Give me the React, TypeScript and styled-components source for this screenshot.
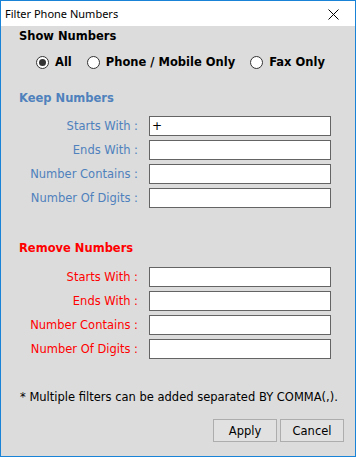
import React, { FC } from 'react';
import styled, { createGlobalStyle } from 'styled-components';

const GlobalStyle = createGlobalStyle`
  html, body {
    margin: 0;
    padding: 0;
    background: #ffffff;
  }
  * {
    box-sizing: border-box;
  }
`;

const colors = {
  accent: '#1883d7',
  face: '#dcdcdc',
  keep: '#4f81bd',
  remove: '#ff0000',
  inputBorder: '#646464',
};

type Field = { label: string; value?: string };

const FIELDS: Field[] = [
  { label: 'Starts With :' },
  { label: 'Ends With :' },
  { label: 'Number Contains :' },
  { label: 'Number Of Digits :' },
];

const RADIOS = [
  { label: 'All', checked: true },
  { label: 'Phone / Mobile Only', checked: false },
  { label: 'Fax Only', checked: false },
];

const App: FC = () => {
  return (
    <>
      <GlobalStyle />
      <Window>
        <TitleBar>
          <Title>Filter Phone Numbers</Title>
          <CloseButton aria-label="Close">
            <svg width="11" height="11" viewBox="0 0 11 11">
              <path d="M0.5 0.5 L10.5 10.5 M10.5 0.5 L0.5 10.5" stroke="#000" strokeWidth="1" />
            </svg>
          </CloseButton>
        </TitleBar>
        <Body>
          <Heading>Show Numbers</Heading>
          <RadioRow>
            {RADIOS.map(r => (
              <RadioOption key={r.label}>
                <RadioCircle $checked={r.checked} />
                <RadioLabel>{r.label}</RadioLabel>
              </RadioOption>
            ))}
          </RadioRow>

          <SectionTitle $color={colors.keep} $top={22} $bottom={11}>
            Keep Numbers
          </SectionTitle>
          <FieldGrid>
            {FIELDS.map((f, i) => (
              <React.Fragment key={f.label}>
                <FieldLabel $color={colors.keep}>{f.label}</FieldLabel>
                <TextBox>{i === 0 ? '+' : ''}</TextBox>
              </React.Fragment>
            ))}
          </FieldGrid>

          <SectionTitle $color={colors.remove} $top={33} $bottom={12}>
            Remove Numbers
          </SectionTitle>
          <FieldGrid>
            {FIELDS.map(f => (
              <React.Fragment key={f.label}>
                <FieldLabel $color={colors.remove}>{f.label}</FieldLabel>
                <TextBox />
              </React.Fragment>
            ))}
          </FieldGrid>

          <Note>* Multiple filters can be added separated BY COMMA(,).</Note>

          <ButtonRow>
            <Button>Apply</Button>
            <Button>Cancel</Button>
          </ButtonRow>
        </Body>
      </Window>
    </>
  );
};

const Window = styled.div`
  width: 356px;
  height: 457px;
  border: 1px solid ${colors.accent};
  display: flex;
  flex-direction: column;
  background: ${colors.face};
  font-family: 'DejaVu Sans', Verdana, sans-serif;
  font-size: 11.5px;
`;

const TitleBar = styled.div`
  height: 25px;
  background: #ffffff;
  display: flex;
  align-items: center;
  justify-content: space-between;
  padding-left: 4px;
`;

const Title = styled.div`
  font-family: 'Noto Sans', 'Open Sans', sans-serif;
  font-size: 11px;
  color: #000;
  margin-top: -1px;
`;

const CloseButton = styled.div`
  width: 46px;
  height: 25px;
  display: flex;
  align-items: center;
  justify-content: center;
  padding-top: 1px;
  margin-right: -1px;
`;

const Body = styled.div`
  flex: 1;
  display: flex;
  flex-direction: column;
  padding: 3px 11px 0 18px;
`;

const Heading = styled.div`
  line-height: 14px;
  font-weight: bold;
  color: #000;
`;

const RadioRow = styled.div`
  display: flex;
  align-items: center;
  gap: 15px;
  margin-top: 12px;
  padding-left: 17px;
  height: 14px;
`;

const RadioOption = styled.label`
  display: inline-flex;
  align-items: center;
  gap: 6px;
`;

const RadioCircle = styled.span<{ $checked: boolean }>`
  width: 13px;
  height: 13px;
  border-radius: 50%;
  border: 1px solid #333;
  background: #fff;
  display: inline-flex;
  align-items: center;
  justify-content: center;

  &::after {
    content: '';
    width: 7px;
    height: 7px;
    border-radius: 50%;
    background: ${p => (p.$checked ? '#333' : 'transparent')};
  }
`;

const RadioLabel = styled.span`
  font-weight: bold;
  color: #000;
`;

const SectionTitle = styled.div<{ $color: string; $top: number; $bottom: number }>`
  margin: ${p => p.$top}px 0 ${p => p.$bottom}px;
  line-height: 14px;
  font-weight: bold;
  color: ${p => p.$color};
`;

const FieldGrid = styled.div`
  display: grid;
  grid-template-columns: 119px 182px;
  grid-auto-rows: 20px;
  column-gap: 11px;
  row-gap: 4px;
`;

const FieldLabel = styled.div<{ $color: string }>`
  color: ${p => p.$color};
  text-align: right;
  align-self: center;
  white-space: nowrap;
`;

const TextBox = styled.div`
  height: 20px;
  border: 1px solid ${colors.inputBorder};
  background: #fff;
  font-size: 12px;
  line-height: 18px;
  padding-left: 2px;
  color: #000;
`;

const Note = styled.div`
  margin-top: 31px;
  padding-left: 1px;
  line-height: 14px;
  color: #000;
  white-space: nowrap;
`;

const ButtonRow = styled.div`
  display: flex;
  justify-content: flex-end;
  gap: 3px;
  margin-top: 15px;
`;

const Button = styled.button`
  width: 64px;
  height: 23px;
  border: 1px solid #adadad;
  background: #e1e1e1;
  font-family: 'DejaVu Sans', Verdana, sans-serif;
  font-size: 11.5px;
  color: #000;
  padding: 0;
`;

export default App;
